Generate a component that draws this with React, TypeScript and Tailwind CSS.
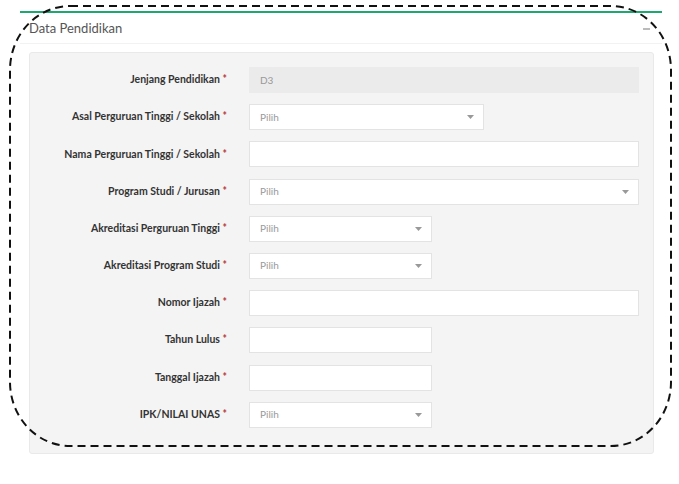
import { FC } from 'react';

type Field = {
  label: string;
  kind: 'disabled' | 'select' | 'text';
  width: 'full' | 'md' | 'sm';
  value?: string;
};

const fields: Field[] = [
  { label: 'Jenjang Pendidikan', kind: 'disabled', width: 'full', value: 'D3' },
  { label: 'Asal Perguruan Tinggi / Sekolah', kind: 'select', width: 'md', value: 'Pilih' },
  { label: 'Nama Perguruan Tinggi / Sekolah', kind: 'text', width: 'full' },
  { label: 'Program Studi / Jurusan', kind: 'select', width: 'full', value: 'Pilih' },
  { label: 'Akreditasi Perguruan Tinggi', kind: 'select', width: 'sm', value: 'Pilih' },
  { label: 'Akreditasi Program Studi', kind: 'select', width: 'sm', value: 'Pilih' },
  { label: 'Nomor Ijazah', kind: 'text', width: 'full' },
  { label: 'Tahun Lulus', kind: 'text', width: 'sm' },
  { label: 'Tanggal Ijazah', kind: 'text', width: 'sm' },
  { label: 'IPK/NILAI UNAS', kind: 'select', width: 'sm', value: 'Pilih' },
];

const widthClass = {
  full: 'w-[390px]',
  md: 'w-[235px]',
  sm: 'w-[183px]',
};

const Caret: FC = () => (
  <svg width="7" height="4" viewBox="0 0 7 4" className="shrink-0">
    <path d="M0 0H7L3.5 4Z" fill="#999" />
  </svg>
);

const FormRow: FC<{ field: Field }> = ({ field }) => {
  const box =
    field.kind === 'disabled'
      ? 'bg-[#ebebeb] border-[#ebebeb]'
      : 'bg-white border-[#e3e3e3]';

  return (
    <div className="flex items-center">
      <div className="w-[197px] text-right text-[10.5px] font-bold text-[#333]">
        {field.label} <span className="text-[#b5373b]">*</span>
      </div>
      <div
        className={`ml-[22px] flex h-[26px] items-center justify-between border pl-[10px] pr-[9px] text-[10px] text-[#999] ${box} ${widthClass[field.width]}`}
      >
        <span>{field.value ?? ''}</span>
        {field.kind === 'select' && <Caret />}
      </div>
    </div>
  );
};

export default function App() {
  return (
    <div
      className="relative h-[484px] w-[679px] bg-white pl-[20px] pr-[17px] pt-[11px]"
      style={{ fontFamily: 'Lato, "Open Sans", sans-serif' }}
    >
      <div className="border-t-2 border-[#1fa772] bg-white">
        <div className="flex h-[31px] items-center justify-between border-b border-[#f2f2f2] pl-[9px] pr-[12px] pt-[1px]">
          <div className="text-[13px] text-[#555]">Data Pendidikan</div>
          <div className="h-[2px] w-[7px] bg-[#bbb]" />
        </div>
        <div className="pb-[9px] pl-[9px] pr-[8px] pt-[8px]">
          <div className="flex flex-col gap-[11.2px] rounded-[3px] border border-[#e9e9e9] bg-[#f4f4f4] pb-[25px] pt-[14px]">
            {fields.map((f) => (
              <FormRow key={f.label} field={f} />
            ))}
          </div>
        </div>
      </div>

      {/* annotation outline */}
      <svg
        className="pointer-events-none absolute left-0 top-0"
        width="679"
        height="484"
        viewBox="0 0 679 484"
      >
        <rect
          x="10"
          y="6"
          width="661"
          height="440"
          rx="60"
          ry="64"
          fill="none"
          stroke="#111"
          strokeWidth="2"
          strokeDasharray="8 5"
        />
      </svg>
    </div>
  );
}
